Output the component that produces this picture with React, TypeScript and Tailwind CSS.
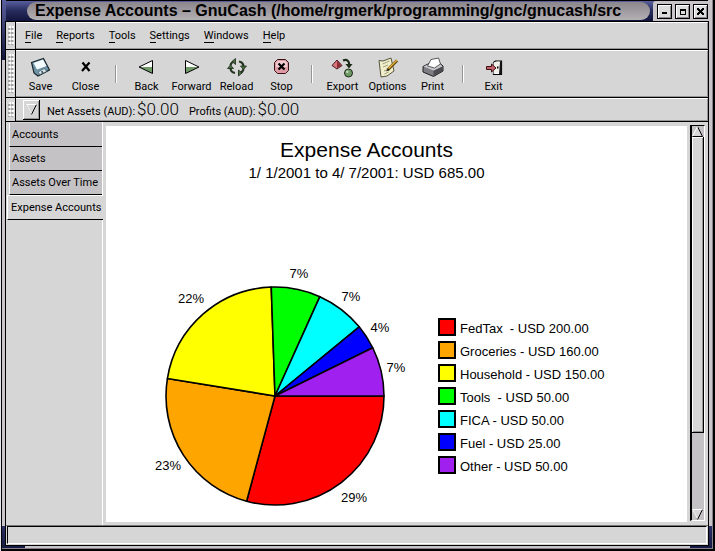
import React from "react";

type Slice = { name: string; amount: string; value: number; color: string; pct: string; x: number; y: number };

const slices: Slice[] = [
  { name: "FedTax ", amount: "USD 200.00", value: 200, color: "#ff0000", pct: "29%", x: 248, y: 242 },
  { name: "Groceries", amount: "USD 160.00", value: 160, color: "#ffa500", pct: "23%", x: 62, y: 210 },
  { name: "Household", amount: "USD 150.00", value: 150, color: "#ffff00", pct: "22%", x: 85, y: 43 },
  { name: "Tools ", amount: "USD 50.00", value: 50, color: "#00ff00", pct: "7%", x: 193, y: 18 },
  { name: "FICA", amount: "USD 50.00", value: 50, color: "#00ffff", pct: "7%", x: 245, y: 41 },
  { name: "Fuel", amount: "USD 25.00", value: 25, color: "#0000ff", pct: "4%", x: 274, y: 72 },
  { name: "Other", amount: "USD 50.00", value: 50, color: "#a020f0", pct: "7%", x: 290, y: 112 },
];

const menus = ["File", "Reports", "Tools", "Settings", "Windows", "Help"];
const tabs = ["Accounts", "Assets", "Assets Over Time", "Expense Accounts"];

const CX = 169;
const CY = 136;
const R = 109;

function wedges() {
  const total = slices.reduce((sum, s) => sum + s.value, 0);
  let start = 0;
  return slices.map((s) => {
    const end = start + (s.value / total) * Math.PI * 2;
    const d = `M${CX} ${CY}L${CX + R * Math.cos(start)} ${CY + R * Math.sin(start)}A${R} ${R} 0 0 1 ${CX + R * Math.cos(end)} ${CY + R * Math.sin(end)}Z`;
    start = end;
    return <path key={s.name} d={d} fill={s.color} stroke="#000" strokeWidth="1.6" strokeLinejoin="round" />;
  });
}

function Icon({ children }: { children: React.ReactNode }) {
  return (
    <svg viewBox="0 0 24 22" className="h-[22px] w-6" aria-hidden="true">
      {children}
    </svg>
  );
}

const icons: Record<string, React.ReactNode> = {
  Save: (
    <Icon>
      <path d="M2.500 6.500L14.500 2.500L20.500 14L9 20L5 17Z" fill="#6d93a5" stroke="#18262c" strokeWidth="1.200" />
      <path d="M4.500 7L14 3.500L17.500 10L8 13.500Z" fill="#f4fbff" />
      <path d="M9 16L15.500 12.500L17.500 15.500L11 18.500Z" fill="#dfe7ea" stroke="#33505c" strokeWidth=".6" />
      <path d="M12 15.500l1.500-.8l1 1.800l-1.500.8z" fill="#33505c" />
    </Icon>
  ),
  Close: (
    <Icon>
      <path d="M8.500 6.500l7 8.500M15.500 6.500l-7.500 8.500" stroke="#000" strokeWidth="2.200" fill="none" />
    </Icon>
  ),
  Back: (
    <Icon>
      <path d="M17.500 4.500V17.500L4 11Z" fill="#fff" />
      <path d="M17.500 11V17.500L4 11Z" fill="#6f9a67" />
      <path d="M17.500 4.500V17.500L4 11Z" fill="none" stroke="#000" strokeLinejoin="round" />
    </Icon>
  ),
  Forward: (
    <Icon>
      <path d="M5.500 4.500V17.500L19 11Z" fill="#fff" />
      <path d="M5.500 11V17.500L19 11Z" fill="#6f9a67" />
      <path d="M5.500 4.500V17.500L19 11Z" fill="none" stroke="#000" strokeLinejoin="round" />
    </Icon>
  ),
  Reload: (
    <Icon>
      <path d="M5.500 9.500C6 7 7.500 5.500 10 5.500M14 5.500C17 6 18.500 8 18.500 11" fill="none" stroke="#24351f" strokeWidth="2.200" />
      <path d="M18.500 13C18 15.500 16 17 13.500 17M10 17C7 16.500 5.500 14.500 5.500 12" fill="none" stroke="#24351f" strokeWidth="2.200" />
      <path d="M10.500 2.500v6L7 5.500z" fill="#4b6b42" stroke="#1c2a18" strokeWidth=".8" />
      <path d="M13.500 14v6l3.500-3z" fill="#4b6b42" stroke="#1c2a18" strokeWidth=".8" />
      <path d="M2.500 12.500h6L5.500 9z" fill="#4b6b42" stroke="#1c2a18" strokeWidth=".8" />
      <path d="M15.500 10h6l-3 3.500z" fill="#4b6b42" stroke="#1c2a18" strokeWidth=".8" />
    </Icon>
  ),
  Stop: (
    <Icon>
      <path d="M7.500 3.500h8l3 3v8l-3 3h-8l-3-3v-8z" fill="#dd9ba5" stroke="#3a1216" />
      <path d="M8 5h7l2 2v4H6V7z" fill="#f1ccd1" />
      <path d="M8.500 7.500l6 6M14.500 7.500l-6 6" stroke="#000" strokeWidth="2.200" />
    </Icon>
  ),
  Export: (
    <Icon>
      <path d="M1 9.500L6 4l5 5.500L6 13z" fill="#d6757c" stroke="#3a1216" strokeWidth=".9" />
      <path d="M6 4.500v8l4.500-3z" fill="#8e2f38" />
      <path d="M12 4.500c3.500-1.500 6 0 6.300 4" fill="none" stroke="#1c2a18" strokeWidth="2.200" />
      <path d="M14.500 8h7l-3.500 4.500z" fill="#1c2a18" />
      <circle cx="17.500" cy="17" r="4" fill="#6f9a67" stroke="#1c2a18" />
      <circle cx="16.300" cy="15.700" r="1.200" fill="#c5dcbf" />
    </Icon>
  ),
  Options: (
    <Icon>
      <path d="M3 4.500l4 .5l8-3l3 13l-7 5l-6 1z" fill="#f1eecb" stroke="#45432b" strokeWidth=".9" />
      <path d="M6.500 8l7-3M7 11l5-2M8 15l3-1M8.500 18l4-2" stroke="#8c8a68" strokeWidth=".8" />
      <path d="M21 4.500L11.500 14" stroke="#5a3e00" strokeWidth="3" />
      <path d="M21 4L11.500 13.500" stroke="#e3b341" strokeWidth="1.500" />
      <path d="M12 12l-2 3.500l3.500-1.500z" fill="#222" />
    </Icon>
  ),
  Print: (
    <Icon>
      <path d="M2 10.500L8 7.500H19L22 10V15L12.500 20.500L2 16z" fill="#7d7d83" stroke="#1e1e20" />
      <path d="M2.500 10.500L8 8H19L21.500 10.500L12.500 14.500z" fill="#c9c9ce" />
      <path d="M6.500 10L10 3.500L17.500 2L19.500 8L13.500 12z" fill="#fff" stroke="#333" strokeWidth=".8" />
      <path d="M12.500 15V20L21.500 15V10.500z" fill="#4b4b51" />
    </Icon>
  ),
  Exit: (
    <Icon>
      <path d="M11.500 6.500l2-1.500h6v13.500h-8z" fill="#fff" stroke="#000" strokeWidth="1.200" />
      <path d="M18 5.500h2v13h-3z" fill="#111" />
      <path d="M11.500 6.500l5.500-1v11l-5.500 1.500z" fill="#f2f0e8" />
      <path d="M4.500 10.500h5v-2.500l4.500 4l-4.500 4v-2.500h-5z" fill="#c9636b" stroke="#3a1216" />
      <path d="M15 10.500h1.500v2H15z" fill="#000" />
    </Icon>
  ),
};

const groups = [["Save", "Close"], ["Back", "Forward", "Reload", "Stop"], ["Export", "Options", "Print"], ["Exit"]];

function Handle() {
  return (
    <div className="w-[10px] shrink-0 border-r border-black bg-[#d6d6d6] py-1 pr-px pl-[2px]">
      <div className="h-full bg-[conic-gradient(#fff_25%,#d6d6d6_25%_50%,#a2a2a2_50%_75%,#d6d6d6_75%)] bg-[size:3px_4px]" />
    </div>
  );
}

function Bar({ height, children }: { height: string; children: React.ReactNode }) {
  return (
    <div className={`flex shrink-0 border-b border-black ${height}`}>
      <Handle />
      <div className="flex min-w-0 flex-1 items-center border-t border-r border-b border-t-white border-r-[#969696] border-b-[#969696]">
        {children}
      </div>
    </div>
  );
}

function WindowButton({ label, children }: { label: string; children: React.ReactNode }) {
  return (
    <button
      type="button"
      aria-label={label}
      className="flex size-[15px] items-center justify-center border border-black bg-[#dcdcdc] shadow-[inset_1px_1px_#fff,inset_-1px_-1px_#8a868a]"
    >
      <svg viewBox="0 0 9 9" className="size-[9px]" shapeRendering="crispEdges" aria-hidden="true">
        {children}
      </svg>
    </button>
  );
}

function TitleBar() {
  return (
    <header className="flex h-[21px] shrink-0 items-center border-t border-t-black bg-[#c8c4c8] bg-linear-to-b from-[#5a5f9e] via-[#262b5c] to-[#12163c] pl-[21px]">
      <h1 className="h-[18px] min-w-0 flex-1 overflow-hidden rounded-[9px] bg-linear-to-b from-[#8a868c] to-[#b4b0b4] pl-2 font-['Liberation_Sans',sans-serif] text-[16px] leading-[18px] font-bold whitespace-nowrap text-black">
        Expense Accounts – GnuCash (/home/rgmerk/programming/gnc/gnucash/src
      </h1>
      <div className="ml-[3px] flex h-full items-center gap-[3px] rounded-tl-[3px] bg-[#c8c4c8] pl-1">
        <WindowButton label="Minimize">
          <path d="M2 5h5v2H2z" />
        </WindowButton>
        <WindowButton label="Maximize">
          <path d="M2 2h6v6H2zM3 4v3h4V4z" fillRule="evenodd" />
        </WindowButton>
        <WindowButton label="Close window">
          <path d="M1 1h2l1.500 2L6 1h2v1L6 4.500L8 7v1H6L4.500 6L3 8H1V7l2-2.500L1 2z" />
        </WindowButton>
      </div>
    </header>
  );
}

function Money({ label }: { label: string }) {
  return (
    <span className="flex items-baseline gap-[2px]">
      {label}
      <span className="text-[17px] leading-5 font-light">$0.00</span>
    </span>
  );
}

function DownArrow() {
  return (
    <svg viewBox="0 0 11 11" className="size-[11px]" aria-hidden="true">
      <path d="M.5 .5h10L5.500 10.500z" fill="#d6d6d6" />
      <path d="M10.500 .5L5.500 10.500" stroke="#000" />
      <path d="M5.500 10.500L.5 .5" stroke="#969696" />
      <path d="M10.500 .5H.5L5 9" fill="none" stroke="#fff" />
    </svg>
  );
}

function Scrollbar() {
  return (
    <div className="mt-[3px] mr-[3px] mb-1 ml-[3px] flex w-[15px] shrink-0 flex-col border-t border-r border-b border-l-2 border-t-black border-r-white border-b-white border-l-black bg-[#c5c2c5]">
      <svg viewBox="0 0 11 11" className="size-[11px]" aria-hidden="true">
        <path d="M.5 10.500h10L5.500 .5z" fill="#d6d6d6" />
        <path d="M5.500 .5L10.500 10.500H.5" fill="none" stroke="#000" />
        <path d="M.5 10L5.500 .5" stroke="#fff" />
      </svg>
      <div className="h-[296px] w-full border-r border-b border-black bg-[#d6d6d6] shadow-[inset_1px_1px_#fff,inset_-1px_-1px_#969696]" />
      <div className="mt-auto">
        <DownArrow />
      </div>
    </div>
  );
}

function Report() {
  return (
    <main className="min-w-0 flex-1 bg-white font-['Liberation_Sans',sans-serif] text-black">
      <h2 className="pt-3 pr-[60px] text-center text-[21px] leading-6">Expense Accounts</h2>
      <p className="pr-[60px] text-center text-[15px] leading-[22px]">1/ 1/2001 to 4/ 7/2001: USD 685.00</p>
      <div className="mt-[76px] flex">
        <svg viewBox="0 0 332 252" className="h-[252px] w-[332px] shrink-0 text-[13px]" role="img" aria-label="Expenses by account">
          {wedges()}
          {slices.map((s) => (
            <text key={s.name} x={s.x} y={s.y} textAnchor="middle">
              {s.pct}
            </text>
          ))}
        </svg>
        <ul className="flex flex-col gap-[5px] pt-[58px] text-[13px]">
          {slices.map((s) => (
            <li key={s.name} className="flex h-[18px] items-center gap-1 whitespace-pre">
              <span className="size-[18px] border-2 border-black" style={{ backgroundColor: s.color }} />
              <span className="pt-[3px]">
                {s.name} - {s.amount}
              </span>
            </li>
          ))}
        </ul>
      </div>
    </main>
  );
}

export default function App() {
  return (
    <div className="flex min-h-screen flex-col bg-[#c8c4c8] bg-[linear-gradient(#5a5f9e,#12163c),linear-gradient(#2a3064,#12163c),linear-gradient(#2a3064,#12163c)] bg-[size:6px_60px,25px_25px,25px_25px] bg-[position:0_0,0_100%,100%_100%] bg-no-repeat pr-[7px] pb-[5px] pl-[6px] font-[Roboto,sans-serif] text-[11px] text-black shadow-[inset_1px_0_#e6e6f0,inset_2px_0_#000,inset_-2px_-2px_#000,inset_-3px_-3px_#85818a]">
      <TitleBar />
      <div className="-mx-px flex flex-1 flex-col border-x border-t border-b border-black bg-[#d6d6d6]">
        <Bar height="h-7">
          <nav className="flex gap-[14px] pl-[9px]">
            {menus.map((m) => (
              <button key={m} type="button" className="leading-[14px]">
                <span className="border-b border-black">{m[0]}</span>
                {m.slice(1)}
              </button>
            ))}
          </nav>
        </Bar>
        <Bar height="h-12">
          <div className="flex pl-[2px]">
            {groups.map((group, i) => (
              <div key={group[0]} className="flex items-center">
                {i > 0 && <div className="mx-[7px] h-[18px] w-[2px] border-r border-l border-r-white border-l-[#969696]" />}
                {group.map((name) => (
                  <button key={name} type="button" className="flex w-[45px] flex-col items-center gap-[2px] pt-[2px] leading-[14px]">
                    {icons[name]}
                    {name}
                  </button>
                ))}
              </div>
            ))}
          </div>
        </Bar>
        <Bar height="h-6">
          <div className="flex items-center gap-[10px] pl-[7px]">
            <div className="flex items-center gap-[7px]">
              <button
                type="button"
                aria-label="Summary options"
                className="flex h-5 w-[17px] items-center justify-center border-r border-b border-black shadow-[inset_1px_1px_#fff,inset_-1px_-1px_#969696]"
              >
                <DownArrow />
              </button>
              <Money label="Net Assets (AUD):" />
            </div>
            <Money label="Profits (AUD):" />
          </div>
        </Bar>
        <div className="flex flex-1 border-b border-[#777]">
          <nav className="flex w-[97px] shrink-0 flex-col border-r border-white pt-px">
            {tabs.map((t) =>
              t === "Expense Accounts" ? (
                <button key={t} type="button" className="-mr-px ml-px h-[25px] border-t border-b border-l border-t-white border-b-black border-l-white bg-[#d6d6d6] pt-[2px] pl-[3px] text-left">
                  {t}
                </button>
              ) : (
                <button key={t} type="button" className="ml-[3px] h-6 border-b border-l border-b-black border-l-white bg-[#c5c2c5] pt-[2px] pl-[2px] text-left">
                  {t}
                </button>
              ),
            )}
          </nav>
          <div className="flex min-w-0 flex-1">
            <div className="flex min-w-0 flex-1 pt-1 pb-[3px] pl-[3px]">
              <Report />
            </div>
            <Scrollbar />
          </div>
        </div>
        <footer className="mx-px mb-px h-[18px] shrink-0 border-t border-r border-b border-l border-t-black border-r-white border-b-white border-l-black" />
      </div>
    </div>
  );
}
